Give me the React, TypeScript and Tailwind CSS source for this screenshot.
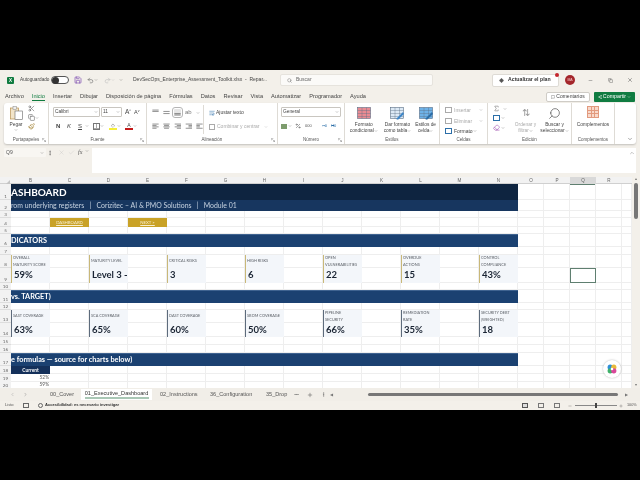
import React from "react";
import { ChevronDown, ChevronUp, ChevronLeft, ChevronRight, Search, X, Minus, Check, Plus, Diamond, Scissors, Copy, Paintbrush, Undo2, Redo2, Save, MessageSquare, Share2, MoreHorizontal, MoreVertical, WrapText, Percent, Sigma, Eraser } from "lucide-react";

const Chev = ({ c = "text-[#666]" }: { c?: string }) => <ChevronDown size={4} strokeWidth={2} className={`${c} shrink-0`} />;

function Lines({ kind }: { kind: "top" | "mid" | "bot" | "left" | "center" | "right" | "in" | "out" }) {
  const ys: Record<string, number[][]> = {
    top: [[1, 9], [3, 9]],
    mid: [[3, 9], [6, 9]],
    bot: [[6, 9], [8, 9]],
    left: [[1, 9], [3, 6], [5, 9], [7, 6]],
    center: [[1, 9], [3, 7], [5, 9], [7, 7]],
    right: [[1, 9], [3, 6], [5, 9], [7, 6]],
    in: [[1, 9], [3, 5], [5, 5], [7, 9]],
    out: [[1, 9], [3, 5], [5, 5], [7, 9]],
  };
  return (
    <svg width="7" height="7" viewBox="0 0 10 9" className="shrink-0">
      {ys[kind].map((l, i) => {
        const x0 = kind === "right" || kind === "in" ? 10 - l[1] : kind === "center" ? (10 - l[1]) / 2 : 0.5;
        return <line key={i} x1={x0} x2={x0 + l[1]} y1={l[0]} y2={l[0]} stroke="#666" strokeWidth="1" />;
      })}
    </svg>
  );
}

function Group({ w, label, launcher, children }: { w: string; label: string; launcher?: boolean; children: React.ReactNode }) {
  return (
    <div className={`${w} h-full shrink-0 flex flex-col border-r border-[#dedbd5] relative`}>
      <div className="flex-1 min-h-0 flex">{children}</div>
      <div className="h-[8px] text-center text-[4.5px] leading-[8px] text-[#555]">{label}</div>
      {launcher && <svg width="4" height="4" viewBox="0 0 6 6" className="absolute right-[2px] bottom-[2px]"><path d="M0.5 0.5h3M0.5 0.5v3M2 2l3.5 3.5M5.5 3v2.5H3" stroke="#777" strokeWidth="0.7" fill="none" /></svg>}
    </div>
  );
}

function GridIcon({ fill, accent }: { fill: string; accent?: string }) {
  return (
    <svg width="14" height="13" viewBox="0 0 14 13">
      <rect x="0.5" y="0.5" width="13" height="11" fill={fill} stroke="#5a6f86" strokeWidth="0.6" />
      <path d="M0.5 3.5h13M0.5 6.5h13M0.5 9.5h13M5 0.5v11M9.5 0.5v11" stroke="#5a6f86" strokeWidth="0.4" />
      {accent && <path d="M6 12 L13 5 L14 7 L8 12.8Z" fill={accent} />}
    </svg>
  );
}

function StyleBtn({ w, icon, l1, l2, gray }: { w: string; icon: React.ReactNode; l1: string; l2: string; gray?: boolean }) {
  return (
    <div className={`${w} flex flex-col items-center pt-[3px] text-[4.8px] leading-[6px] ${gray ? "text-[#aaa]" : "text-[#444]"}`}>
      <div className="h-[14px] flex items-center">{icon}</div>
      <div className="mt-[2px] whitespace-nowrap">{l1}</div>
      <div className="flex items-center whitespace-nowrap">{l2}<Chev /></div>
    </div>
  );
}

function TitleBar() {
  return (
    <div className="h-[20px] flex items-center text-[5px] text-[#444]">
      <div className="w-[7px] h-[7px] ml-[7px] bg-[#107c41] text-white text-[4.5px] leading-[7px] font-bold text-center rounded-[1px]">X</div>
      <span className="ml-[6px] w-[28px] whitespace-nowrap text-[4.7px]">Autoguardado</span>
      <div className="ml-[3px] w-[18px] h-[8px] rounded-full border border-[#555] bg-white flex items-center">
        <div className="w-[7px] h-[7px] rounded-full bg-[#333]" />
      </div>
      <Save size={8} className="ml-[5px] text-[#7b4bb0]" strokeWidth={2} />
      <Undo2 size={7} className="ml-[5px] text-[#666]" />
      <Chev />
      <Redo2 size={7} className="ml-[6px] text-[#bbb]" />
      <Chev c="text-[#bbb]" />
      <span className="ml-[4px]"><Chev /></span>
      <span className="ml-[10px] w-[128px] whitespace-nowrap text-[5px]">DevSecOps_Enterprise_Assessment_Toolkit.xlsx&nbsp; - &nbsp;Repar...</span>
      <Chev />
      <div className="ml-[15px] w-[153px] h-[12px] bg-[#fbfaf8] border border-[#e6e3dd] rounded-[2px] flex items-center pl-[6px] text-[#666]">
        <Search size={5} className="mr-[4px]" />Buscar
      </div>
      <div className="ml-[59px] relative w-[67px] h-[13px] bg-white border border-[#dedbd5] rounded-[2px] flex items-center pl-[6px] font-bold text-[5.2px] text-[#333] whitespace-nowrap">
        <Diamond size={5} className="mr-[4px] fill-[#555] text-[#555]" />Actualizar el plan
        <div className="absolute -top-[2px] -right-[1px] w-[4px] h-[4px] rounded-full bg-[#c4262e]" />
      </div>
      <div className="ml-[6px] w-[10px] h-[10px] rounded-full bg-[#a4262c] text-[#f3c8c8] text-[3.5px] leading-[10px] text-center">MA</div>
      <Minus size={5} className="ml-[13px] text-[#555]" />
      <Copy size={5} className="ml-[15px] text-[#555]" />
      <X size={6} className="ml-[14px] text-[#555]" />
    </div>
  );
}

function MenuBar() {
  const items = ["Archivo", "Inicio", "Insertar", "Dibujar", "Disposición de página", "Fórmulas", "Datos", "Revisar", "Vista", "Automatizar", "Programador", "Ayuda"];
  return (
    <div className="h-[13px] flex items-center pl-[5px] text-[5.65px] text-[#444]">
      <div className="flex gap-[8px] w-[541px]">
        {items.map((t) => (
          <span key={t} className={`whitespace-nowrap ${t === "Inicio" ? "border-b border-[#107c41] text-[#107c41] leading-[8px]" : "leading-[8px]"}`}>{t}</span>
        ))}
      </div>
      <div className="w-[44px] h-[10px] bg-white border border-[#cfccc6] rounded-[2px] flex items-center justify-center text-[5px] whitespace-nowrap">
        <MessageSquare size={4} className="mr-[1px]" />Comentarios
      </div>
      <div className="ml-[4px] w-[41px] h-[10px] bg-[#107c41] rounded-[1px] text-white flex items-center justify-center text-[5.3px] whitespace-nowrap">
        <Share2 size={4} className="mr-[1px]" />Compartir<ChevronDown size={4} className="ml-[1px]" />
      </div>
    </div>
  );
}

function Ribbon() {
  return (
    <div className="mx-[4px] h-[41px] bg-white rounded-[3px] shadow-[0_1px_2px_rgba(0,0,0,0.2)] flex relative text-[#444]">
      <Group w="w-[45px]" label="Portapapeles" launcher>
        <div className="w-[24px] flex flex-col items-center pt-[3px] text-[4.8px] leading-[6px]">
          <svg width="13" height="14" viewBox="0 0 13 14">
            <rect x="0.5" y="2" width="8" height="11" fill="#f2e4c8" stroke="#b8914f" strokeWidth="0.7" />
            <rect x="3" y="0.5" width="3.5" height="3" fill="#eee" stroke="#888" strokeWidth="0.5" />
            <rect x="5" y="5" width="7.5" height="8.5" fill="#fff" stroke="#666" strokeWidth="0.6" />
          </svg>
          <span className="mt-[2px]">Pegar</span>
          <Chev />
        </div>
        <div className="flex flex-col gap-[2px] pt-[2px] text-[#666]">
          <Scissors size={7} />
          <div className="flex items-center"><Copy size={7} /><Chev /></div>
          <Paintbrush size={7} className="text-[#a08030]" />
        </div>
      </Group>
      <Group w="w-[98px]" label="Fuente" launcher>
        <div className="flex flex-col pl-[4px] pt-[4px] gap-[5px]">
          <div className="flex items-center">
            <div className="w-[47px] h-[10px] border border-[#c9c6c0] rounded-[1px] flex items-center justify-between px-[1px] text-[4.8px]">Calibri<Chev /></div>
            <div className="ml-[1px] w-[21px] h-[10px] border border-[#c9c6c0] rounded-[1px] flex items-center justify-between px-[1px] text-[4.8px]">11<Chev /></div>
            <span className="ml-[3px] text-[6.5px] leading-[8px]">A<sup className="text-[3.5px]">^</sup></span>
            <span className="ml-[3px] text-[5.5px] leading-[8px]">A<sup className="text-[3.5px]">v</sup></span>
          </div>
          <div className="flex items-center text-[6px] pl-[3px] h-[8px]">
            <b className="w-[11px]">N</b>
            <i className="w-[11px]">K</i>
            <u className="w-[7px]">S</u><Chev />
            <div className="ml-[4px] w-[7px] h-[7px] border border-[#777] grid grid-cols-2"><div className="border-r border-b border-[#aaa]" /><div className="border-b border-[#aaa]" /></div>
            <Chev />
            <div className="ml-[5px] w-[8px] flex flex-col items-center"><span className="text-[5px] leading-[5px] text-[#666]">◇</span><div className="w-[8px] h-[2px] bg-[#f5ee3a]" /></div>
            <Chev />
            <div className="ml-[4px] w-[8px] flex flex-col items-center"><span className="text-[5px] leading-[5px]">A</span><div className="w-[8px] h-[2px] bg-[#c41a1a]" /></div>
            <Chev />
          </div>
        </div>
      </Group>
      <Group w="w-[131px]" label="Alineación" launcher>
        <div className="w-[56px] flex flex-col pl-[5px] pt-[5px] gap-[5px]">
          <div className="flex items-center gap-[4px] h-[9px]">
            <Lines kind="top" /><Lines kind="mid" />
            <div className="w-[7px] h-[7px] outline outline-[#b5b5b5] outline-offset-[1px] bg-[#e6e6e6] rounded-[1px] flex items-center justify-center"><Lines kind="bot" /></div>
            <span className="text-[6px] leading-[7px] text-[#777]">ab</span><Chev />
          </div>
          <div className="flex items-center gap-[4px] h-[9px]">
            <Lines kind="left" /><Lines kind="center" /><Lines kind="right" /><Lines kind="in" /><Lines kind="out" />
          </div>
        </div>
        <div className="my-[2px] border-l border-[#dedbd5] pl-[5px] flex flex-col pt-[3px] gap-[5px] text-[5px]">
          <div className="flex items-center h-[9px] whitespace-nowrap"><WrapText size={6} className="mr-[1px] text-[#2b6ea8]" />Ajustar texto</div>
          <div className="flex items-center h-[9px] whitespace-nowrap text-[#aaa]"><div className="w-[6px] h-[6px] border border-[#aaa] mr-[2px]" />Combinar y centrar<span className="ml-[4px]"><Chev c="text-[#aaa]" /></span></div>
        </div>
      </Group>
      <Group w="w-[67px]" label="Número" launcher>
        <div className="flex flex-col pl-[3px] pt-[4px] gap-[6px] text-[4.8px]">
          <div className="w-[60px] h-[10px] border border-[#c9c6c0] rounded-[1px] flex items-center justify-between px-[1px]">General<Chev /></div>
          <div className="flex items-center gap-[1px] text-[#555]">
            <div className="w-[6px] h-[5px] bg-[#7d9c6d]" /><Chev />
            <Percent size={6} className="ml-[2px]" />
            <span className="ml-[3px] text-[4px]">000</span>
            <span className="ml-[9px] text-[4px] text-[#2b6ea8]">↤0</span>
            <span className="ml-[3px] text-[4px] text-[#2b6ea8]">↦0</span>
          </div>
        </div>
      </Group>
      <Group w="w-[95px]" label="Estilos">
        <StyleBtn w="w-[38px]" icon={<GridIcon fill="#e98b92" />} l1="Formato" l2="condicional" />
        <StyleBtn w="w-[30px]" icon={<GridIcon fill="#dce9f5" accent="#3e86c8" />} l1="Dar formato" l2="como tabla" />
        <StyleBtn w="w-[27px]" icon={<GridIcon fill="#6eb2e8" accent="#2b6ea8" />} l1="Estilos de" l2="celda" />
      </Group>
      <Group w="w-[48px]" label="Celdas">
        <div className="flex flex-col pl-[5px] pt-[2px] text-[5px] leading-[10.5px] w-full">
          <div className="flex items-center text-[#aaa]"><div className="w-[7px] h-[6px] border border-[#aaa] mr-[2px]" /><span className="w-[25px]">Insertar</span><Chev c="text-[#888]" /></div>
          <div className="flex items-center text-[#aaa]"><div className="w-[7px] h-[6px] border border-[#aaa] mr-[2px]" /><span className="w-[25px]">Eliminar</span><Chev c="text-[#888]" /></div>
          <div className="flex items-center"><div className="w-[7px] h-[6px] border border-[#2b6ea8] mr-[2px]" />Formato<Chev /></div>
        </div>
      </Group>
      <Group w="w-[84px]" label="Edición">
        <div className="w-[24px] flex flex-col pl-[5px] pt-[2px] gap-[3px]">
          <div className="flex items-center"><Sigma size={7} className="text-[#777]" /><span className="ml-[3px]"><Chev /></span></div>
          <div className="flex items-center"><div className="w-[7px] h-[6px] border border-[#2b6ea8]" /><span className="ml-[1px]"><Chev /></span></div>
          <div className="flex items-center"><Eraser size={7} className="text-[#a050b0]" /><span className="ml-[1px]"><Chev /></span></div>
        </div>
        <StyleBtn w="w-[27px]" gray icon={<span className="text-[10px] text-[#999]">⇅</span>} l1="Ordenar y" l2="filtrar" />
        <StyleBtn w="w-[31px]" icon={<Search size={13} strokeWidth={1.2} className="-scale-x-100" />} l1="Buscar y" l2="seleccionar" />
      </Group>
      <Group w="w-[43px]" label="Complementos">
        <div className="w-full flex flex-col items-center pt-[3px] text-[4.8px] leading-[6px]">
          <div className="w-[12px] h-[12px] grid grid-cols-3 gap-[1px] bg-[#e29a7e] p-[1px]">
            {Array.from({ length: 9 }).map((_, i) => <div key={i} className="bg-[#f8d9cb]" />)}
          </div>
          <span className="mt-[4px] whitespace-nowrap">Complementos</span>
        </div>
      </Group>
      <div className="flex-1 flex items-end justify-end pr-[3px] pb-[2px]"><ChevronDown size={6} className="text-[#555]" /></div>
    </div>
  );
}

function FormulaBar() {
  return (
    <div className="mt-[4px] mx-[4px] h-[25px] flex text-[#555]">
      <div className="w-[42px] h-[9px] bg-[#f8f6f2] rounded-[1px] flex items-center justify-between px-[2px] text-[5px]">Q9<Chev /></div>
      <MoreVertical size={6} className="ml-[1px] mt-[2px]" />
      <div className="w-[39px] flex items-start pt-[1px] gap-[3px] pl-[5px] text-[#bbb]">
        <X size={7} strokeWidth={1} /><Check size={7} strokeWidth={1} /><span className="text-[#555] italic text-[6px] font-['Liberation_Serif',serif] leading-[7px]">fx</span><Chev />
      </div>
      <div className="flex-1 bg-white flex justify-end pr-[1px] pt-[2px]"><ChevronUp size={6} className="text-[#888]" /></div>
    </div>
  );
}

const ROWH = "border-b border-[#dddddd] bg-[#f2f2f2] text-[#666] text-[4.6px] flex items-end justify-center leading-[6px]";
const SHEETGRID = "grid grid-cols-[11px_repeat(13,39px)_repeat(4,26px)_10px]";
const Blank = ({ sel }: { sel?: boolean }) => <div className={sel ? "border border-[#5f7f70] z-10" : "border-r border-b border-[#eeeeee]"} />;
const Blanks = ({ n }: { n: number }) => <>{Array.from({ length: n }).map((_, i) => <Blank key={i} />)}</>;

function Row({ n, h, children, sel }: { n: number; h: string; children?: React.ReactNode; sel?: boolean }) {
  return (
    <div className={`${SHEETGRID} ${h}`}>
      <div className={`${ROWH} ${sel ? "bg-[#d9d9d9]" : ""}`}>{n}</div>
      {children ?? <Blanks n={18} />}
    </div>
  );
}

function Section({ n, h, text }: { n: number; h: string; text: string }) {
  return (
    <Row n={n} h={h}>
      <div className="col-span-13 bg-[#1b4171] border-t border-[#3f6390] text-white font-bold text-[7.3px] leading-[12px] whitespace-nowrap overflow-hidden">{text}</div>
      <Blanks n={5} />
    </Row>
  );
}

type Kpi = { label: React.ReactNode; value: string };
const KPI1: Kpi[] = [
  { label: <>OVERALL<br />MATURITY SCORE</>, value: "59%" },
  { label: "MATURITY LEVEL", value: "Level 3 -" },
  { label: "CRITICAL RISKS", value: "3" },
  { label: "HIGH RISKS", value: "6" },
  { label: <>OPEN<br />VULNERABILITIES</>, value: "22" },
  { label: <>OVERDUE<br />ACTIONS</>, value: "15" },
  { label: <>CONTROL<br />COMPLIANCE</>, value: "43%" },
];
const KPI2: Kpi[] = [
  { label: "SAST COVERAGE", value: "63%" },
  { label: "SCA COVERAGE", value: "65%" },
  { label: "DAST COVERAGE", value: "60%" },
  { label: "SBOM COVERAGE", value: "50%" },
  { label: <>PIPELINE<br />SECURITY</>, value: "66%" },
  { label: <>REMEDIATION<br />RATE</>, value: "35%" },
  { label: <>SECURITY DEBT<br />(WEIGHTED)</>, value: "18" },
];

function KpiRows({ a, b, items, bar, ha, hb, sel }: { a: number; b: number; items: Kpi[]; bar: string; ha: string; hb: string; sel?: boolean }) {
  return (
    <>
      <Row n={a} h={ha}>
        {items.map((k, i) => (
          <React.Fragment key={i}>
            <div className={`bg-[#f3f6fa] border-l ${bar} pl-[1px] text-[3.9px] leading-[6.4px] text-[#5a5f66] whitespace-nowrap overflow-hidden flex items-center`}><div>{k.label}</div></div>
            {i < 6 && <Blank />}
          </React.Fragment>
        ))}
        <Blanks n={5} />
      </Row>
      <Row n={b} h={hb} sel={sel}>
        {items.map((k, i) => (
          <React.Fragment key={i}>
            <div className={`bg-[#f3f6fa] border-l ${bar} pl-[2px] text-[9.5px] leading-[14px] font-bold text-[#1a2433] whitespace-nowrap overflow-hidden`}>{k.value}</div>
            {i < 6 && <Blank />}
          </React.Fragment>
        ))}
        <Blank /><Blank />
        <Blank sel={sel} />
        <Blank /><Blank />
      </Row>
    </>
  );
}

function Sheet() {
  const cols = ["B", "C", "D", "E", "F", "G", "H", "I", "J", "K", "L", "M", "N", "O", "P", "Q", "R", ""];
  return (
    <div className="flex-1 min-w-0 overflow-hidden font-['Lato',sans-serif] relative">
      <div className={`${SHEETGRID} h-[7px] bg-[#f2f2f2] border-b border-[#d0d0d0] font-['Liberation_Sans',sans-serif]`}>
        <div className="relative"><div className="absolute right-[1px] bottom-[1px] w-0 h-0 border-l-[4px] border-l-transparent border-b-[4px] border-b-[#c4c4c4]" /></div>
        {cols.map((c, i) => (
          <div key={i} className={`text-center text-[4.6px] leading-[7px] text-[#666] ${c === "Q" ? "bg-[#d9d9d9] border-b border-[#5f7f70]" : ""}`}>{c}</div>
        ))}
      </div>
      <Row n={1} h="h-[16px]">
        <div className="col-span-13 bg-[#0e2440] text-white font-bold text-[10px] leading-[16px] whitespace-nowrap overflow-hidden">ASHBOARD</div>
        <Blanks n={5} />
      </Row>
      <Row n={2} h="h-[11px]">
        <div className="col-span-13 bg-[#17365f] text-[#c6d2e0] text-[6.9px] leading-[11px] whitespace-pre overflow-hidden">{"rom underlying registers   |   Corizitec – AI & PMO Solutions   |   Module 01"}</div>
        <Blanks n={5} />
      </Row>
      <Row n={3} h="h-[7px]" />
      <Row n={4} h="h-[9px]">
        <Blank />
        <div className="bg-[#c9a227] text-[#f7efd2] text-[4.3px] leading-[9px] text-center underline">DASHBOARD</div>
        <Blank />
        <div className="bg-[#c9a227] text-[#f7efd2] text-[4.3px] leading-[9px] text-center underline">NEXT &gt;</div>
        <Blanks n={14} />
      </Row>
      <Row n={5} h="h-[7px]" />
      <Section n={6} h="h-[13px]" text="DICATORS" />
      <Row n={7} h="h-[8px]" />
      <KpiRows a={8} b={9} items={KPI1} bar="border-[#c9b878]" ha="h-[13px]" hb="h-[15px]" sel />
      <Row n={10} h="h-[7px]" />
      <Section n={11} h="h-[13px]" text="vs. TARGET)" />
      <Row n={12} h="h-[7px]" />
      <KpiRows a={13} b={14} items={KPI2} bar="border-[#5d6b7c]" ha="h-[13px]" hb="h-[14px]" />
      <Row n={15} h="h-[8px]" />
      <Row n={16} h="h-[8px]" />
      <Section n={17} h="h-[13px]" text="e formulas — source for charts below)" />
      <Row n={18} h="h-[8px]">
        <div className="bg-[#14305a] text-white font-bold text-[4.8px] leading-[8px] text-center">Current</div>
        <Blanks n={17} />
      </Row>
      <Row n={19} h="h-[7px]">
        <div className="text-right pr-[1px] text-[4.8px] leading-[7px] text-[#555] border-b border-[#eeeeee]">52%</div>
        <Blanks n={17} />
      </Row>
      <Row n={20} h="h-[7px]">
        <div className="text-right pr-[1px] text-[4.8px] leading-[7px] text-[#555] border-b border-[#eeeeee]">59%</div>
        <Blanks n={17} />
      </Row>
      <div className="absolute left-[603px] top-[183px] w-[18px] h-[18px] rounded-full bg-white shadow-[0_0_2px_rgba(0,0,0,0.3)] flex items-center justify-center">
        <svg width="10" height="10" viewBox="0 0 10 10">
          <circle cx="3.2" cy="3.2" r="2.6" fill="#2f8fd8" />
          <circle cx="6.8" cy="3.2" r="2.6" fill="#e8b93a" />
          <circle cx="3.2" cy="6.8" r="2.6" fill="#3fb16a" />
          <circle cx="6.8" cy="6.8" r="2.6" fill="#d8479a" />
          <circle cx="5" cy="5" r="1.3" fill="#fff" />
        </svg>
      </div>
    </div>
  );
}

function Scrollbar() {
  return (
    <div className="w-[8px] flex flex-col items-center bg-[#f3f0ea]">
      <div className="text-[3.5px] leading-[5px] text-[#777]">▲</div>
      <div className="mt-[1px] w-[3.5px] h-[36px] rounded-full bg-[#777]" />
      <div className="flex-1" />
      <div className="text-[3.5px] leading-[5px] text-[#777]">▼</div>
    </div>
  );
}

function TabBar() {
  return (
    <div className="h-[13px] flex items-center text-[5.55px] text-[#555] bg-[#f1eee8]">
      <ChevronLeft size={5} className="ml-[10px] text-[#999]" />
      <ChevronRight size={5} className="ml-[8px] text-[#777]" />
      <span className="ml-[22px] w-[31px] whitespace-nowrap">00_Cover</span>
      <div className="w-[71px] h-[11px] bg-white flex flex-col items-center justify-center font-medium text-[#333] whitespace-nowrap">
        <span className="leading-[7px]">01_Executive_Dashboard</span>
        <div className="w-[64px] h-[1.5px] bg-[#a9c7b5]" />
      </div>
      <span className="ml-[8px] w-[50px] whitespace-nowrap">02_Instructions</span>
      <span className="w-[56px] whitespace-nowrap">36_Configuration</span>
      <span className="w-[27px] whitespace-nowrap">35_Drop</span>
      <MoreHorizontal size={5} className="ml-[1px]" />
      <Plus size={6} className="ml-[8px]" />
      <MoreVertical size={5} className="ml-[8px]" />
      <span className="ml-[4px] text-[4px] text-[#777]">◀</span>
      <div className="ml-[35px] w-[250px] h-[3.5px] rounded-full bg-[#777]" />
      <span className="ml-[7px] text-[4px] text-[#777]">▶</span>
    </div>
  );
}

function StatusBar() {
  return (
    <div className="h-[9px] flex items-center text-[4.1px] text-[#555] bg-[#f3f0ea]">
      <span className="ml-[5px] w-[18px]">Listo</span>
      <div className="w-[6px] h-[5px] border border-[#666]" />
      <div className="ml-[9px] w-[5px] h-[5px] rounded-full border border-[#666]" />
      <span className="ml-[2px] font-bold text-[#333] whitespace-nowrap w-[477px]">Accesibilidad: es necesario investigar</span>
      <div className="w-[6px] h-[5px] border border-[#555] bg-[#ddd]" />
      <div className="ml-[10px] w-[6px] h-[5px] border border-[#777]" />
      <div className="ml-[10px] w-[6px] h-[5px] border border-[#777]" />
      <Minus size={4} className="ml-[8px]" />
      <div className="ml-[3px] w-[42px] h-[1px] bg-[#888] relative"><div className="absolute left-[20px] -top-[2px] w-[1.5px] h-[5px] bg-[#444]" /></div>
      <Plus size={4} className="ml-[2px]" />
      <span className="ml-[4px] text-[3.8px]">100%</span>
    </div>
  );
}

export default function App() {
  return (
    <div className="w-[640px] h-[480px] bg-black overflow-hidden pt-[70px] font-['Liberation_Sans',sans-serif] blur-[0.3px]">
      <div className="h-[340px] bg-[#f3f0ea] flex flex-col">
        <TitleBar />
        <MenuBar />
        <Ribbon />
        <FormulaBar />
        <div className="mt-[4px] h-[211px] flex bg-white"><Sheet /><Scrollbar /></div>
        <TabBar />
        <StatusBar />
      </div>
    </div>
  );
}
